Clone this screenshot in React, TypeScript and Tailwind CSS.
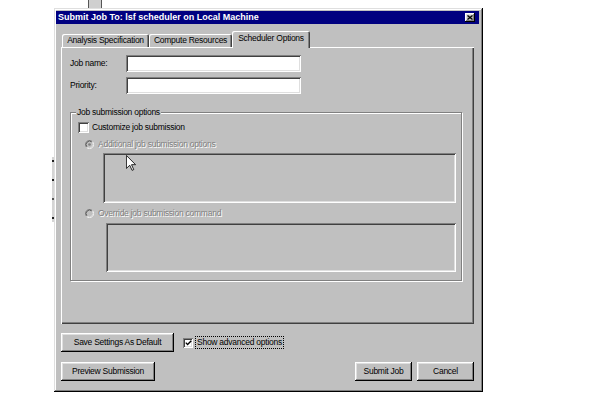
import clsx from 'clsx';

const raisedWin =
  'shadow-[inset_-1px_-1px_0_#000000,inset_1px_1px_0_#dfdfdf,inset_-2px_-2px_0_#808080,inset_2px_2px_0_#ffffff]';
const raisedBtn =
  'shadow-[inset_-1px_-1px_0_#000000,inset_1px_1px_0_#ffffff,inset_-2px_-2px_0_#808080,inset_2px_2px_0_#dfdfdf]';
const sunken =
  'shadow-[inset_1px_1px_0_#808080,inset_-1px_-1px_0_#ffffff,inset_2px_2px_0_#404040,inset_-2px_-2px_0_#dfdfdf]';
const etched = 'text-[#808080] [text-shadow:1px_1px_0_#ffffff]';

function Button({ label, className }: { label: string; className?: string }) {
  return (
    <div
      className={clsx(
        'flex h-[19px] shrink-0 items-center justify-center whitespace-nowrap bg-[#c0c0c0] pb-[1px] text-black',
        raisedBtn,
        className,
      )}
    >
      {label}
    </div>
  );
}

function Tab({ label, active, className }: { label: string; active?: boolean; className?: string }) {
  return (
    <div
      className={clsx(
        'flex items-center justify-center whitespace-nowrap rounded-t-[2px] bg-[#c0c0c0] text-black',
        active
          ? 'relative z-10 -mb-px h-[17px] pb-[2px] shadow-[inset_1px_1px_0_#ffffff,inset_-1px_0_0_#404040,inset_-2px_0_0_#808080]'
          : 'h-[13px] shadow-[inset_1px_1px_0_#ffffff,inset_-1px_0_0_#404040,inset_-2px_0_0_#808080]',
        className,
      )}
    >
      {label}
    </div>
  );
}

function Radio({ dot }: { dot?: boolean }) {
  return (
    <svg width="9" height="9" viewBox="0 0 12 12" className="shrink-0">
      <circle cx="6" cy="6" r="5" fill="#c0c0c0" />
      <path d="M9.9 2.1 A5.5 5.5 0 0 0 2.1 9.9" stroke="#808080" fill="none" />
      <path d="M2.1 9.9 A5.5 5.5 0 0 0 9.9 2.1" stroke="#ffffff" fill="none" />
      <path d="M9.2 2.8 A4.5 4.5 0 0 0 2.8 9.2" stroke="#404040" fill="none" />
      <path d="M2.8 9.2 A4.5 4.5 0 0 0 9.2 2.8" stroke="#dfdfdf" fill="none" />
      {dot && <circle cx="6" cy="6" r="1.8" fill="#808080" />}
    </svg>
  );
}

function Field({ label }: { label: string }) {
  return (
    <div className="flex h-[17px] items-center">
      <span className="w-[56px]">{label}</span>
      <div className={clsx('h-[17px] w-[175px] bg-white', sunken)} />
    </div>
  );
}

export default function App() {
  return (
    <div className="relative h-[395px] w-[600px] overflow-hidden bg-white font-['Liberation_Sans',Arial,sans-serif] text-[8.5px] leading-none tracking-[-0.25px] text-black">
      {/* bits of the window behind */}
      <div className="absolute left-[88px] top-0 h-[8px] w-[14px] border-x border-[#555] bg-[#cfcfcf]" />
      <div className="absolute left-[52px] top-[157px] flex h-[65px] w-[2px] flex-col justify-between bg-[#d4d4d4] py-[3px]">
        <div className="h-[2px] bg-[#222]" />
        <div className="h-[2px] bg-[#222]" />
        <div className="h-[2px] bg-[#555]" />
        <div className="h-[2px] bg-[#222]" />
      </div>

      <div className={clsx('ml-[54px] mt-[8px] flex h-[384px] w-[429px] flex-col bg-[#c0c0c0] pl-[2px] pr-[4px] pt-[3px]', raisedWin)}>
        {/* title bar */}
        <div className="flex h-[13px] items-center justify-between bg-[#000080] pl-[2px] pr-[4px]">
          <span className="text-[9px] font-bold tracking-normal text-white">
            Submit Job To: lsf scheduler on Local Machine
          </span>
          <div className={clsx('flex h-[9px] w-[10px] items-center justify-center bg-[#c0c0c0]', raisedBtn)}>
            <svg width="6" height="5" viewBox="0 0 6 5">
              <path d="M0.5 0.5 L5.5 4.5 M5.5 0.5 L0.5 4.5" stroke="#000" strokeWidth="1.3" />
            </svg>
          </div>
        </div>

        {/* tabs */}
        <div className="ml-[6px] mt-[8px] flex h-[15px] items-end">
          <Tab label="Analysis Specification" className="w-[87px]" />
          <Tab label="Compute Resources" className="w-[83px]" />
          <Tab label="Scheduler Options" active className="w-[78px]" />
        </div>

        {/* tab panel */}
        <div className="ml-[5px] h-[277px] w-[413px] pl-[9px] pt-[8px] shadow-[inset_1px_1px_0_#ffffff,inset_-1px_-1px_0_#404040,inset_-2px_-2px_0_#808080]">
          <Field label="Job name:" />
          <div className="mt-[5px]">
            <Field label="Priority:" />
          </div>

          <div className="relative mt-[18px] h-[169px] w-[392px] border border-[#808080] pl-[7px] pt-[9px] shadow-[1px_1px_0_#ffffff,inset_1px_1px_0_#ffffff]">
            <span className="absolute -top-[5px] left-[5px] bg-[#c0c0c0] px-[1px]">Job submission options</span>

            <div className="flex h-[11px] items-center gap-[3px]">
              <div className={clsx('h-[11px] w-[11px] bg-white', sunken)} />
              <span>Customize job submission</span>
            </div>

            <div className="ml-[7px] mt-[7px] flex h-[9px] items-center gap-[4px]">
              <Radio dot />
              <span className={etched}>Additional job submission options</span>
            </div>
            <div className={clsx('ml-[25px] mt-[4px] h-[50px] w-[353px]', sunken)} />

            <div className="ml-[7px] mt-[6px] flex h-[9px] items-center gap-[4px]">
              <Radio />
              <span className={etched}>Override job submission command</span>
            </div>
            <div className={clsx('ml-[28px] mt-[5px] h-[49px] w-[350px]', sunken)} />
          </div>
        </div>

        {/* bottom rows */}
        <div className="ml-[5px] mt-[9px] flex h-[19px] items-center">
          <Button label="Save Settings As Default" className="w-[113px]" />
          <div className={clsx('ml-[9px] flex h-[10px] w-[10px] items-center justify-center bg-white', sunken)}>
            <svg width="7" height="6" viewBox="0 0 7 6">
              <path d="M0.8 2.6 L2.6 4.6 L6.3 0.8" stroke="#000" strokeWidth="1.4" fill="none" />
            </svg>
          </div>
          <span className="ml-[2px] border border-dotted border-black px-[1px] py-[1px]">Show advanced options</span>
        </div>

        <div className="ml-[5px] mt-[10px] flex h-[19px] w-[413px] items-center">
          <Button label="Preview Submission" className="w-[94px]" />
          <div className="flex-1" />
          <Button label="Submit Job" className="w-[57px]" />
          <Button label="Cancel" className="ml-[5px] w-[57px]" />
        </div>
      </div>

      {/* mouse pointer */}
      <svg className="absolute left-[126px] top-[155px]" width="10" height="16" viewBox="0 0 12 19">
        <path
          d="M0.5 0.5 L0.5 16 L4.5 12.2 L7.3 18.3 L9.3 17.4 L6.6 11.5 L11.5 11.5 Z"
          fill="#ffffff"
          stroke="#000000"
          strokeWidth="1"
        />
      </svg>
    </div>
  );
}
